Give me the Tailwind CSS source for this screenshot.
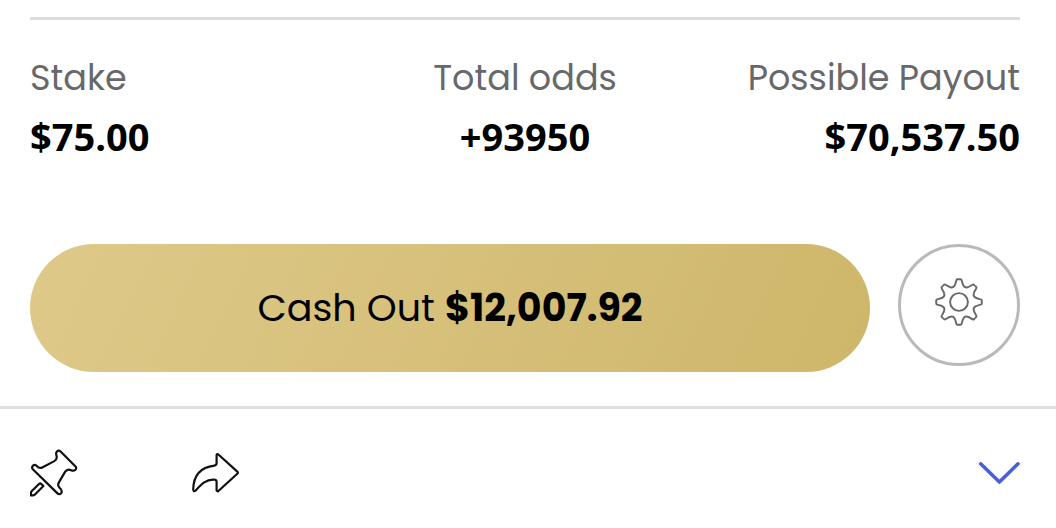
<!DOCTYPE html>
<html lang="en">

<head>
  <meta charset="UTF-8" />
  <meta name="viewport" content="width=device-width, initial-scale=1.0" />
  <title>Bet Slip</title>
  <script src="https://cdn.jsdelivr.net/npm/@tailwindcss/browser@4"></script>
</head>

<body class="bg-white font-['Poppins','Inter',sans-serif] text-black">

  <main class="pl-[30px] pr-9 pt-[17px]">
    <!-- Bet totals -->
    <dl class="grid grid-cols-3 border-t-3 border-[#dddde0] pt-[33px]">
      <div>
        <dt class="text-[35px] leading-[50px] text-[#68686b]">Stake</dt>
        <dd class="mt-2 font-['Open_Sans',sans-serif] text-[38px] leading-[50px] font-bold">$75.00</dd>
      </div>
      <div class="text-center">
        <dt class="text-[35px] leading-[50px] text-[#68686b]">Total odds</dt>
        <dd class="mt-2 font-['Open_Sans',sans-serif] text-[38px] leading-[50px] font-bold">+93950</dd>
      </div>
      <div class="text-right">
        <dt class="text-[35px] leading-[50px] text-[#68686b]">Possible Payout</dt>
        <dd class="mt-2 font-['Open_Sans',sans-serif] text-[38px] leading-[50px] font-bold">$70,537.50</dd>
      </div>
    </dl>

    <div class="mt-[83px] flex items-start gap-7">
      <button type="button"
        class="h-32 flex-1 cursor-pointer rounded-full bg-linear-115 from-[#dec98a] via-[#d6c07a] to-[#ceb669] pb-0.5 text-[38px]">
        Cash Out <span class="font-bold">$12,007.92</span>
      </button>
      <button type="button" aria-label="Cash out settings"
        class="flex size-[122px] shrink-0 cursor-pointer items-center justify-center rounded-full border-3 border-[#b9b9b9] pb-1.5">
        <svg class="size-12" viewBox="-24 -24 48 48" fill="none" stroke="#68686c" stroke-width="1.9">
          <defs>
            <path id="tooth"
              d="M0 -22.8H1.6Q2.3 -22.8 2.5 -22C3.2 -20.5 3.2 -18.5 4.4 -16.5Q5.74 -13.9 8.57 -14.78C10.8 -15.3 12.2 -16.8 13.8 -17.3Q14.5 -17.7 15 -17.2L16.1 -16.1" />
          </defs>
          <use href="#tooth" />
          <use href="#tooth" transform="rotate(45)" />
          <use href="#tooth" transform="rotate(90)" />
          <use href="#tooth" transform="rotate(135)" />
          <use href="#tooth" transform="rotate(180)" />
          <use href="#tooth" transform="rotate(225)" />
          <use href="#tooth" transform="rotate(270)" />
          <use href="#tooth" transform="rotate(315)" />
          <circle r="8.9" />
        </svg>
      </button>
    </div>
  </main>

  <!-- Slip actions -->
  <footer class="mt-[34px] flex items-center border-t-3 border-[#dfdfe0] pt-10 pr-9 pl-[30px]">
    <button type="button" aria-label="Pin bet" class="cursor-pointer">
      <svg class="size-12" viewBox="0 0 48 48" fill="none" stroke="#111" stroke-width="2.2" stroke-linejoin="round">
        <path
          d="M30.6 2.5L45.5 17.6Q47 19.3 45.3 20.8Q43.5 22.3 41.2 21.2Q37.5 19.4 35.2 22.6L28.9 33.4Q27.2 36.3 29.6 38.8Q32.8 41.8 31.2 44.1Q29.5 46.4 27.2 44.1L2.8 20.2Q1.4 18.6 2.9 16.8Q4.9 14.8 7 17.2Q9.4 20 12.7 18.2L24.3 12.1Q27.5 10.3 26.5 6.5Q25.6 4.3 26.8 2.7Q28.6 .7 30.6 2.5Z" />
        <path d="M10.9 34.6L13.4 37.1L5 45.6Q4.2 46.4 3.2 46.4H1V43.6Q1 42.9 1.6 42.3L9.3 34.8Q10.1 34 10.9 34.6Z" />
      </svg>
    </button>
    <button type="button" aria-label="Share bet" class="ml-[113px] cursor-pointer">
      <svg class="size-12" viewBox="0 0 48 48" fill="none" stroke="#111" stroke-width="2.2" stroke-linejoin="round">
        <path
          d="M27.4 5.5L46.3 22.6Q47.5 23.7 46.3 24.8L27.4 42Q26.3 42.8 25.6 41.5V33Q25.6 30.8 23.4 30.7C15.5 30 10.5 35 4.7 41.5Q2.5 43.4 2.2 40.5C2.5 25.5 10 18.2 23.3 16.6Q25.6 16.3 25.6 14V6Q26.2 4.5 27.4 5.5Z" />
      </svg>
    </button>
    <button type="button" aria-label="Collapse slip" class="ml-auto cursor-pointer">
      <svg class="h-6 w-[42px]" viewBox="0 0 42 24" fill="none" stroke="#4a60d6" stroke-width="3.6"
        stroke-linecap="round" stroke-linejoin="round">
        <path d="M2.7 2.8L21.4 21L40 2.8" />
      </svg>
    </button>
  </footer>

</body>

</html>
